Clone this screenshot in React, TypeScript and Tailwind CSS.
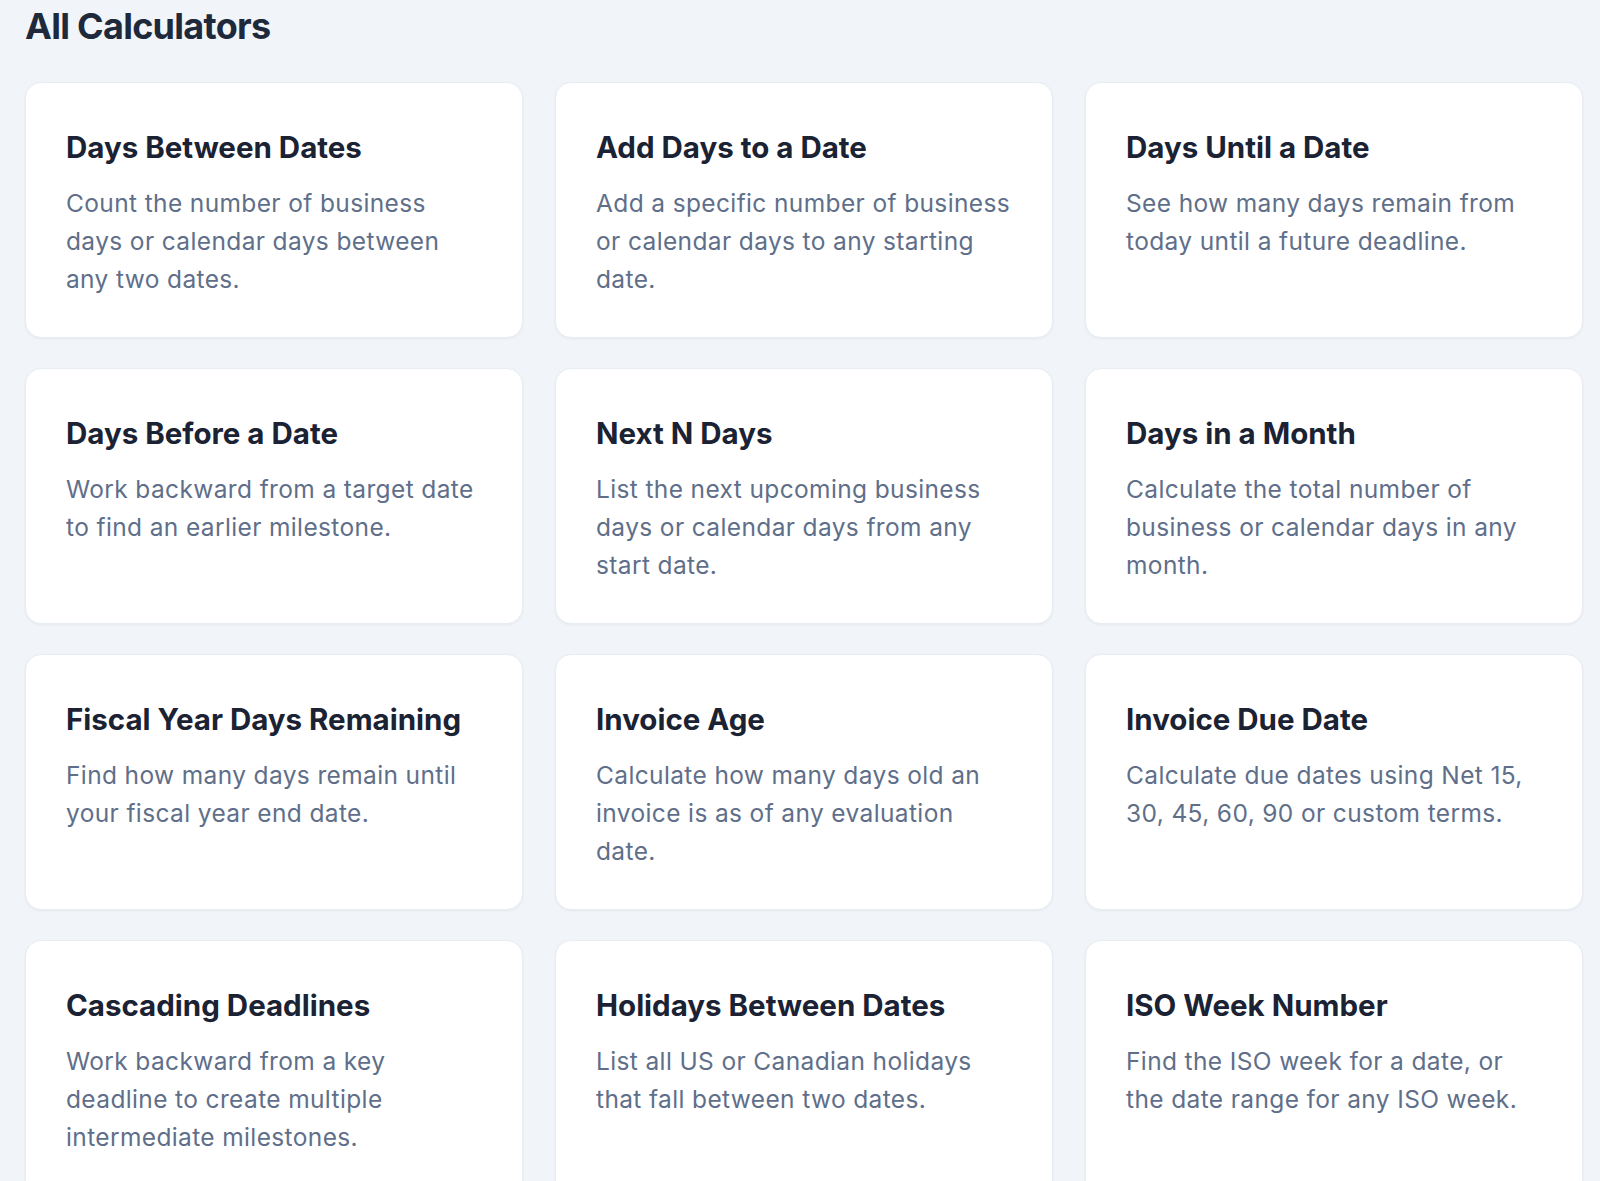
const calculators = [
  {
    title: "Days Between Dates",
    desc: "Count the number of business days or calendar days between any two dates.",
  },
  {
    title: "Add Days to a Date",
    desc: "Add a specific number of business or calendar days to any starting date.",
  },
  {
    title: "Days Until a Date",
    desc: "See how many days remain from today until a future deadline.",
  },
  {
    title: "Days Before a Date",
    desc: "Work backward from a target date to find an earlier milestone.",
  },
  {
    title: "Next N Days",
    desc: "List the next upcoming business days or calendar days from any start date.",
  },
  {
    title: "Days in a Month",
    desc: "Calculate the total number of business or calendar days in any month.",
  },
  {
    title: "Fiscal Year Days Remaining",
    desc: "Find how many days remain until your fiscal year end date.",
  },
  {
    title: "Invoice Age",
    desc: "Calculate how many days old an invoice is as of any evaluation date.",
  },
  {
    title: "Invoice Due Date",
    desc: "Calculate due dates using Net 15, 30, 45, 60, 90 or custom terms.",
  },
  {
    title: "Cascading Deadlines",
    desc: "Work backward from a key deadline to create multiple intermediate milestones.",
  },
  {
    title: "Holidays Between Dates",
    desc: "List all US or Canadian holidays that fall between two dates.",
  },
  {
    title: "ISO Week Number",
    desc: "Find the ISO week for a date, or the date range for any ISO week.",
  },
];

export default function App() {
  return (
    <div className="h-[1181px] overflow-hidden bg-[#f1f5f9] font-['Inter',sans-serif] pl-[25px] pt-[6px]">
      <h1 className="text-[36px] font-bold leading-[40px] tracking-[-0.02em] text-[#1e293b]">
        All Calculators
      </h1>

      <div className="mt-[36px] grid w-[1558px] grid-cols-3 gap-x-[32px] gap-y-[30px]">
        {calculators.map((c) => (
          <a
            key={c.title}
            href="#"
            className="block rounded-2xl border border-[#e8edf3] bg-white pl-[40px] pr-[38px] pt-[45px] pb-[39px] shadow-[0_1px_3px_rgba(15,23,42,0.05)]"
          >
            <h2 className="text-[29.5px] font-bold leading-[38px] text-[#1a2233]">
              {c.title}
            </h2>
            <p className="mt-[18px] text-[24.5px] leading-[38px] tracking-[0.015em] text-[#5f6f8a]">
              {c.desc}
            </p>
          </a>
        ))}
      </div>
    </div>
  );
}
